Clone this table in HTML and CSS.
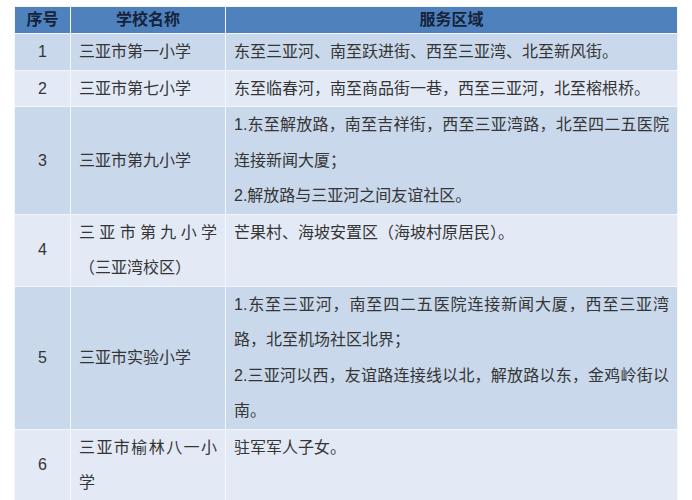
FILE: index.html
```html
<!DOCTYPE html>
<html lang="zh-CN">
<head>
<meta charset="utf-8">
<link rel="stylesheet" href="styles.css">
</head>
<body>
<table class="zone-table">
  <colgroup>
    <col class="c-no">
    <col class="c-name">
    <col class="c-area">
  </colgroup>
  <thead>
    <tr><th>序号</th><th>学校名称</th><th>服务区域</th></tr>
  </thead>
  <tbody>
    <tr class="odd"><td class="no">1</td><td class="name">三亚市第一小学</td><td class="area">东至三亚河、南至跃进街、西至三亚湾、北至新风街。</td></tr>
    <tr class="even"><td class="no">2</td><td class="name">三亚市第七小学</td><td class="area">东至临春河，南至商品街一巷，西至三亚河，北至榕根桥。</td></tr>
    <tr class="odd"><td class="no">3</td><td class="name">三亚市第九小学</td><td class="area">1.东至解放路，南至吉祥街，西至三亚湾路，北至四二五医院连接新闻大厦；<br>2.解放路与三亚河之间友谊社区。</td></tr>
    <tr class="even"><td class="no">4</td><td class="name">三亚市第九小学（三亚湾校区）</td><td class="area">芒果村、海坡安置区（海坡村原居民）。</td></tr>
    <tr class="odd"><td class="no">5</td><td class="name">三亚市实验小学</td><td class="area">1.东至三亚河，南至四二五医院连接新闻大厦，西至三亚湾路，北至机场社区北界；<br>2.三亚河以西，友谊路连接线以北，解放路以东，金鸡岭街以南。</td></tr>
    <tr class="even"><td class="no">6</td><td class="name">三亚市榆林八一小学</td><td class="area">驻军军人子女。</td></tr>
  </tbody>
</table>
</body>
</html>
```
FILE: styles.css
```css
html, body {
  margin: 0;
  padding: 0;
  background: #ffffff;
}
body {
  padding: 6px 0 0 14px;
  font-family: "Liberation Sans", "Noto Sans CJK SC", sans-serif;
  font-size: 16px;
  color: #353535;
}
.zone-table {
  border-collapse: collapse;
  table-layout: fixed;
  width: 663px;
}
.c-no { width: 56px; }
.c-name { width: 155px; }
.c-area { width: 452px; }
.zone-table th,
.zone-table td {
  border: 1px solid #f3f6fb;
  padding: 0 8px;
}
.zone-table th {
  background: #4f81bd;
  color: #15233a;
  font-weight: bold;
  height: 26px;
  line-height: 26px;
  text-align: center;
}
.zone-table td {
  line-height: 35.5px;
  text-align: justify;
}
.odd td { background: #c9d8eb; }
.even td { background: #e3eaf5; }
.zone-table td.no {
  text-align: center;
  vertical-align: middle;
}
.zone-table td.name {
  vertical-align: middle;
}
.zone-table td.area {
  vertical-align: top;
}
```
